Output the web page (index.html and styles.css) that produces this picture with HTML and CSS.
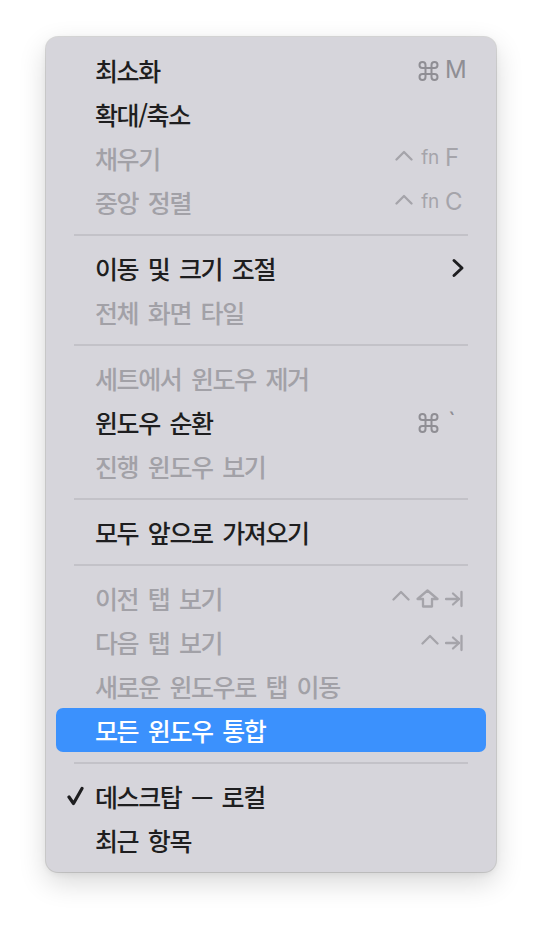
FILE: index.html
```html
<!DOCTYPE html>
<html lang="ko">
<head>
<meta charset="utf-8">
<title>Window menu</title>
<link rel="stylesheet" href="styles.css">
</head>
<body>
<div class="menu">
  <div class="item"><span class="check"></span><span class="label">최소화</span>
    <span class="sc"><span class="mods"><svg class="cmd" width="21" height="22" viewBox="1.5 0 21 22"><path d="M15 6v12a3 3 0 1 0 3-3H6a3 3 0 1 0 3 3V6a3 3 0 1 0-3 3h12a3 3 0 1 0-3-3"/></svg></span><span class="key">M</span></span></div>
  <div class="item"><span class="check"></span><span class="label">확대/축소</span></div>
  <div class="item off"><span class="check"></span><span class="label">채우기</span>
    <span class="sc"><span class="mods"><svg width="18" height="22" viewBox="0 0 18 22"><polyline points="1.5,12.5 9,5 16.5,12.5"/></svg><span class="fn">fn</span></span><span class="key">F</span></span></div>
  <div class="item off"><span class="check"></span><span class="label">중앙 정렬</span>
    <span class="sc"><span class="mods"><svg width="18" height="22" viewBox="0 0 18 22"><polyline points="1.5,12.5 9,5 16.5,12.5"/></svg><span class="fn">fn</span></span><span class="key">C</span></span></div>
  <div class="sep"></div>
  <div class="item"><span class="check"></span><span class="label">이동 및 크기 조절</span>
    <svg class="chev" width="14" height="20" viewBox="0 0 14 20"><polyline points="3,2.5 11,10 3,17.5"/></svg></div>
  <div class="item off"><span class="check"></span><span class="label">전체 화면 타일</span></div>
  <div class="sep"></div>
  <div class="item off"><span class="check"></span><span class="label">세트에서 윈도우 제거</span></div>
  <div class="item"><span class="check"></span><span class="label">윈도우 순환</span>
    <span class="sc"><span class="mods"><svg class="cmd" width="21" height="22" viewBox="1.5 0 21 22"><path d="M15 6v12a3 3 0 1 0 3-3H6a3 3 0 1 0 3 3V6a3 3 0 1 0-3 3h12a3 3 0 1 0-3-3"/></svg></span><span class="key tick">`</span></span></div>
  <div class="item off"><span class="check"></span><span class="label">진행 윈도우 보기</span></div>
  <div class="sep"></div>
  <div class="item"><span class="check"></span><span class="label">모두 앞으로 가져오기</span></div>
  <div class="sep"></div>
  <div class="item off"><span class="check"></span><span class="label">이전 탭 보기</span>
    <span class="sc"><span class="mods tight"><svg width="18" height="22" viewBox="0 0 18 22"><polyline points="1.5,12.5 9,5 16.5,12.5"/></svg><svg width="23" height="22" viewBox="0 0 23 22"><polygon points="11.5,3.5 21.5,12 16,12 16,19.5 7,19.5 7,12 1.5,12"/></svg></span><span class="key"><svg width="18" height="22" viewBox="0 0 18 22"><line x1="1" y1="12" x2="14" y2="12"/><polyline points="8,6.5 14,12 8,17.5"/><line x1="16.5" y1="5" x2="16.5" y2="19"/></svg></span></span></div>
  <div class="item off"><span class="check"></span><span class="label">다음 탭 보기</span>
    <span class="sc"><span class="mods"><svg width="18" height="22" viewBox="0 0 18 22"><polyline points="1.5,12.5 9,5 16.5,12.5"/></svg></span><span class="key"><svg width="18" height="22" viewBox="0 0 18 22"><line x1="1" y1="12" x2="14" y2="12"/><polyline points="8,6.5 14,12 8,17.5"/><line x1="16.5" y1="5" x2="16.5" y2="19"/></svg></span></span></div>
  <div class="item off"><span class="check"></span><span class="label">새로운 윈도우로 탭 이동</span></div>
  <div class="item active"><span class="check"></span><span class="label">모든 윈도우 통합</span></div>
  <div class="sep"></div>
  <div class="item"><span class="check"><svg width="17" height="20" viewBox="0 0 17 20"><polyline points="2,11 6.5,17.5 15,2.5"/></svg></span><span class="label">데스크탑 — 로컬</span></div>
  <div class="item"><span class="check"></span><span class="label">최근 항목</span></div>
</div>
</body>
</html>
```

FILE: styles.css
```css
html, body {
  margin: 0;
  padding: 0;
  background: #ffffff;
}

body {
  width: 542px;
  height: 926px;
  overflow: hidden;
}

.menu {
  width: 450px;
  margin: 37px 0 0 46px;
  padding: 11px 10px 10px;
  box-sizing: border-box;
  background: #d6d5db;
  border-radius: 12px;
  box-shadow: 0 0 0 1px rgba(0, 0, 0, 0.13), 0 10px 28px rgba(0, 0, 0, 0.16), 0 2px 6px rgba(0, 0, 0, 0.06);
}

.item {
  height: 44px;
  display: flex;
  align-items: center;
  padding: 0 17px 0 11px;
  border-radius: 7px;
  color: #1e1e20;
}

.item.off {
  color: #a2a1a7;
}

.item.active {
  background: #3b91fd;
  color: #ffffff;
}

.check {
  width: 28px;
  flex: none;
  display: flex;
  align-items: center;
}

.check svg {
  fill: none;
  stroke: #1e1e20;
  stroke-width: 3.2;
  stroke-linecap: round;
  stroke-linejoin: round;
}

.label {
  font-family: "Noto Sans CJK KR", sans-serif;
  font-size: 25px;
  font-weight: 500;
  letter-spacing: -1.4px;
  word-spacing: 4px;
  line-height: 44px;
  white-space: nowrap;
}

.sc {
  margin-left: auto;
  display: flex;
  align-items: center;
  color: #8f8e94;
  font-family: "Inter", "Liberation Sans", sans-serif;
  font-size: 24px;
  line-height: 44px;
}

.item.off .sc {
  color: #a5a4aa;
}

.mods {
  display: flex;
  align-items: center;
  justify-content: flex-end;
  gap: 8px;
  margin-right: 6px;
}

.mods.tight {
  gap: 6px;
}

.sc svg {
  display: block;
  fill: none;
  stroke: currentColor;
  stroke-width: 2.3;
  stroke-linecap: round;
  stroke-linejoin: round;
}

.sc svg.cmd {
  stroke-width: 2;
}

.fn {
  font-size: 19px;
  letter-spacing: -0.3px;
}

.key {
  width: 24px;
  display: flex;
  align-items: center;
}

.key.tick {
  padding-left: 3px;
  box-sizing: border-box;
}

.chev {
  margin-left: auto;
  margin-right: 4px;
  fill: none;
  stroke: #1e1e20;
  stroke-width: 3;
  stroke-linecap: round;
  stroke-linejoin: round;
}

.sep {
  height: 22px;
  display: flex;
  align-items: center;
  padding: 0 18px;
}

.sep::before {
  content: "";
  flex: 1;
  height: 2px;
  background: #c3c2c8;
}
```
